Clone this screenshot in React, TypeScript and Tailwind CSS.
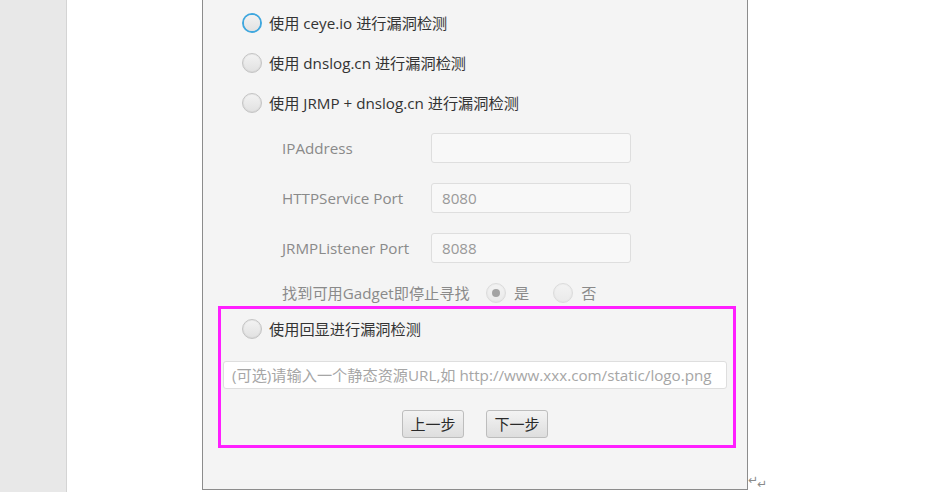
import React from "react";

const font = { fontFamily: '"Open Sans", "Noto Sans CJK SC", sans-serif' };

function Radio({ focused = false, checked = false, disabled = false }: { focused?: boolean; checked?: boolean; disabled?: boolean }) {
  return (
    <div
      className={`relative w-[20px] h-[20px] rounded-full shrink-0 flex items-center justify-center bg-gradient-to-b from-[#e9e9e9] to-[#d8d8d8] ${
        focused ? "border-[2px] border-[#3fa7de]" : "border border-[#c4c4c4]"
      } ${disabled ? "opacity-50" : ""}`}
    >
      <div className="w-[16px] h-[16px] rounded-full bg-gradient-to-b from-[#f2f2f2] to-[#e2e2e2] flex items-center justify-center">
        {checked && <div className="w-[8px] h-[8px] rounded-full bg-[#555]" />}
      </div>
    </div>
  );
}

function Field({ value }: { value?: string }) {
  return (
    <div className="w-[200px] h-[30px] rounded-[3px] border border-[#dedede] bg-[#f8f8f8] flex items-center px-[10px] text-[15.2px] text-[#9a9a9a]">
      {value}
    </div>
  );
}

function Button({ label }: { label: string }) {
  return (
    <div className="w-[62px] h-[28px] rounded-[3px] border border-[#bdbdbd] bg-gradient-to-b from-[#f3f3f3] to-[#dedede] flex items-center justify-center text-[15px] text-[#2a2a2a]">
      {label}
    </div>
  );
}

export default function App() {
  return (
    <div className="w-[930px] h-[492px] flex bg-white overflow-hidden" style={font}>
      <div className="w-[67px] h-full bg-[#e8e8e8] border-r border-[#d4d4d4]" />
      <div className="w-[135px] h-full bg-white" />
      <div className="relative w-[546px] h-[490px] bg-[#f4f4f4] border-l border-r border-b border-[#8c8c8c] flex flex-col">
        <div className="pt-[3px] pl-[39px] flex flex-col">
          <div className="h-[40px] flex items-center gap-[7px] text-[15.2px] text-[#333]">
            <Radio focused />
            <span>使用 ceye.io 进行漏洞检测</span>
          </div>
          <div className="h-[40px] flex items-center gap-[7px] text-[15.2px] text-[#333]">
            <Radio />
            <span>使用 dnslog.cn 进行漏洞检测</span>
          </div>
          <div className="h-[40px] flex items-center gap-[7px] text-[15.2px] text-[#333]">
            <Radio />
            <span>使用 JRMP + dnslog.cn 进行漏洞检测</span>
          </div>
        </div>
        <div className="pl-[79px] mt-[10px] flex flex-col gap-[20px] text-[15.2px] text-[#8a8a8a]">
          <div className="h-[30px] flex items-center">
            <span className="w-[149px]">IPAddress</span>
            <Field />
          </div>
          <div className="h-[30px] flex items-center">
            <span className="w-[149px]">HTTPService Port</span>
            <Field value="8080" />
          </div>
          <div className="h-[30px] flex items-center">
            <span className="w-[149px]">JRMPListener Port</span>
            <Field value="8088" />
          </div>
          <div className="h-[20px] flex items-center">
            <span className="w-[204px]">找到可用Gadget即停止寻找</span>
            <Radio checked disabled />
            <span className="ml-[8px] text-[#8a8a8a]">是</span>
            <div className="ml-[24px]">
              <Radio disabled />
            </div>
            <span className="ml-[8px]">否</span>
          </div>
        </div>
        <div className="ml-[15px] mt-[3px] w-[518px] h-[142px] border-[3px] border-[#ff1fff] flex flex-col">
          <div className="h-[40px] pl-[21px] flex items-center gap-[7px] text-[15.2px] text-[#333]">
            <Radio />
            <span>使用回显进行漏洞检测</span>
          </div>
          <div className="ml-[2px] mt-[12px] w-[504px] h-[28px] rounded-[3px] border border-[#dedede] bg-white flex items-center px-[8px] text-[15.2px] text-[#a6a6a6] whitespace-nowrap">
            (可选)请输入一个静态资源URL,如 http://www.xxx.com/static/logo.png
          </div>
          <div className="mt-[21px] flex justify-center gap-[22px] pr-[4px]">
            <Button label="上一步" />
            <Button label="下一步" />
          </div>
        </div>
      </div>
      <div className="flex-1 h-full bg-white relative">
        <span className="absolute left-[0px] top-[474px] text-[12px] leading-none text-[#8a8a8a]" style={{ fontFamily: '"DejaVu Sans", sans-serif' }}>↵</span>
        <span className="absolute left-[9px] top-[478px] text-[12px] leading-none text-[#8a8a8a]" style={{ fontFamily: '"DejaVu Sans", sans-serif' }}>↵</span>
      </div>
    </div>
  );
}
